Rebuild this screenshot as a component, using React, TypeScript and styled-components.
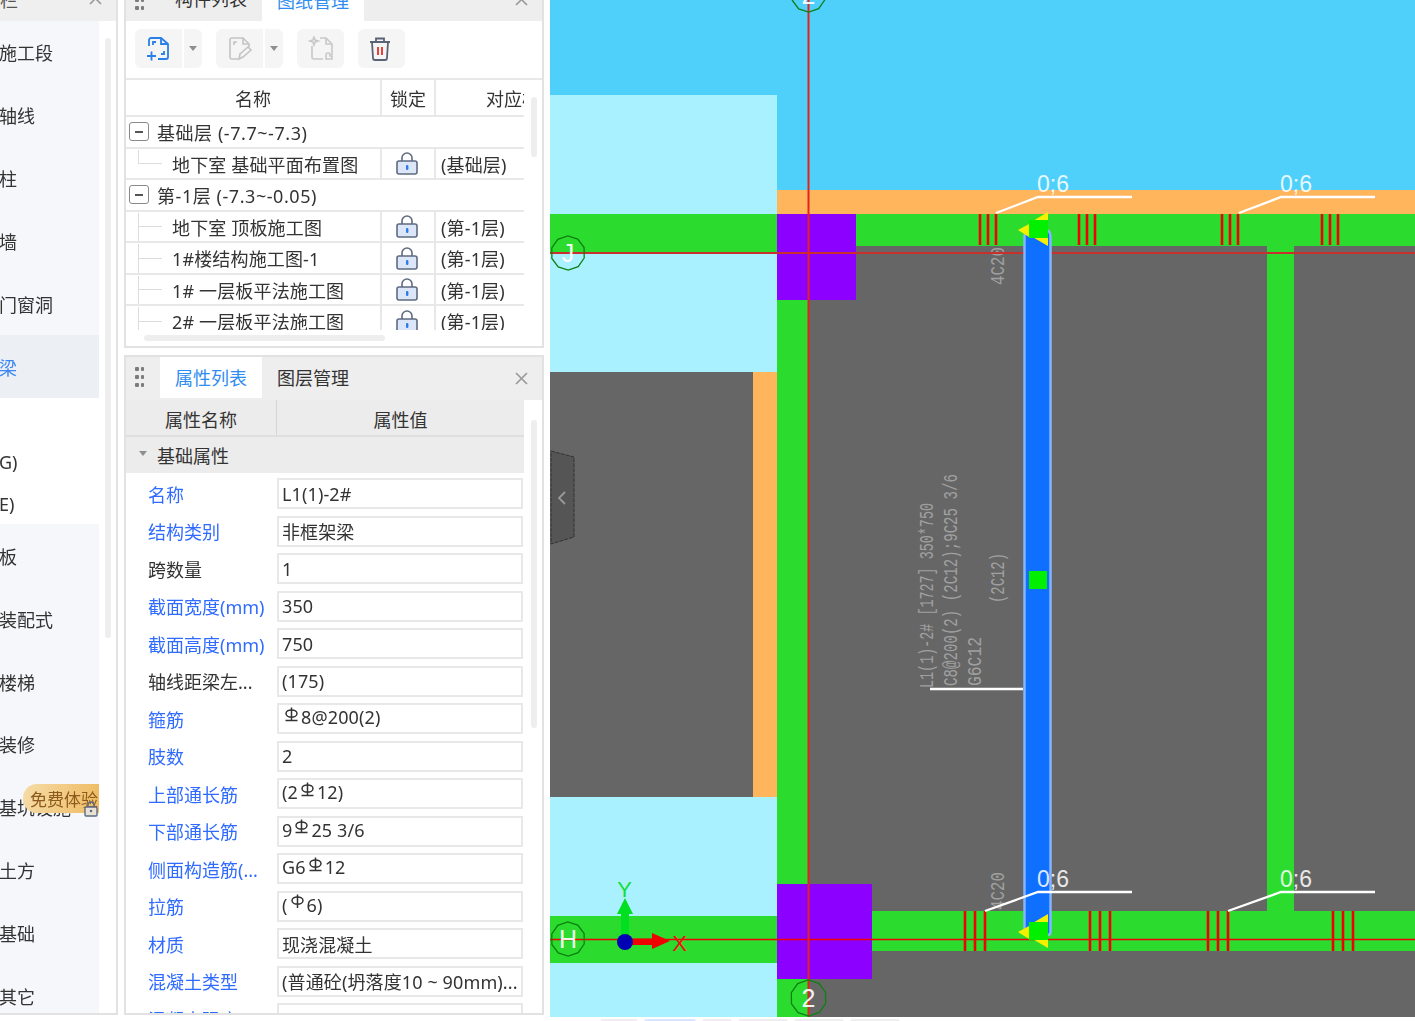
import React from "react";
import styled, { createGlobalStyle } from "styled-components";

const Global = createGlobalStyle`
  html, body { margin: 0; padding: 0; background: #fff; overflow: hidden; }
  body { font-family: "Noto Sans", "Noto Sans CJK SC", sans-serif; color: #333; }
  * { box-sizing: border-box; }
`;

const Page = styled.div`
  width: 1415px;
  height: 1021px;
  overflow: hidden;
`;
const Shell = styled.div`
  display: flex;
  height: 1045px;
  margin-top: -24px;
  filter: blur(0.6px);
`;

/* ---------- left nav ---------- */
const Sidebar = styled.aside`
  width: 118px;
  height: 1039px;
  flex: none;
  display: flex;
  flex-direction: column;
  border-right: 2px solid #e2e2e2;
  border-bottom: 2px solid #e2e2e2;
  overflow: hidden;
`;
const SideHead = styled.div`
  height: 45px;
  flex: none;
  background: #efefef;
  display: flex;
  align-items: center;
  justify-content: space-between;
  padding-right: 14px;
  font-size: 18px;
  color: #555;
`;
const SideBody = styled.div`
  flex: 1;
  display: flex;
  min-height: 0;
`;
const NavList = styled.nav`
  width: 99px;
  flex: none;
  background: #f5f7fa;
  overflow: hidden;
  position: relative;
`;
const NavItem = styled.div<{ $active?: boolean }>`
  height: 62.9px;
  display: flex;
  align-items: center;
  margin-left: -1px;
  font-size: 18px;
  white-space: nowrap;
  background: ${(p) => (p.$active ? "#eceff4" : "transparent")};
  color: ${(p) => (p.$active ? "#3d86f2" : "#333")};
`;
const NavGroup = styled.div`
  height: 126px;
  padding-top: 43px;
  background: #fff;
`;
const NavSub = styled.div`
  height: 42px;
  display: flex;
  align-items: center;
  font-size: 18px;
  margin-left: -1px;
`;
const FreeBadge = styled.div`
  position: absolute;
  left: 23px;
  top: 763px;
  width: 76px;
  height: 29px;
  padding-left: 7px;
  display: flex;
  align-items: center;
  font-size: 17px;
  white-space: nowrap;
  overflow: hidden;
  color: #8c5a1c;
  border-radius: 14px 0 0 14px;
  background: linear-gradient(100deg, #f6dca8, #efbb62);
`;
const BadgeLock = styled.svg`
  position: absolute;
  left: 84px;
  top: 780px;
`;
const SideTrack = styled.div`
  flex: 1;
  padding: 17px 0 0 6px;
`;
const Thumb = styled.div<{ $h: number }>`
  width: 6px;
  height: ${(p) => p.$h}px;
  border-radius: 3px;
  background: #eeeeee;
`;

/* ---------- panels ---------- */
const PanelColumn = styled.div`
  width: 420px;
  height: 1039px;
  margin-left: 6px;
  flex: none;
  display: flex;
  flex-direction: column;
  gap: 7px;
`;
const Panel = styled.section<{ $h?: number }>`
  ${(p) => (p.$h ? `height: ${p.$h}px; flex: none;` : "flex: 1; min-height: 0;")}
  display: flex;
  flex-direction: column;
  border: 2px solid #e2e2e2;
  overflow: hidden;
`;
const TabBar = styled.div`
  height: 43px;
  flex: none;
  display: flex;
  background: #eeeeee;
`;
const Grip = styled.div<{ $top: number }>`
  width: 34px;
  flex: none;
  padding: ${(p) => p.$top}px 0 0 9px;
  display: grid;
  grid-template-columns: repeat(2, 3.5px);
  grid-auto-rows: 3.5px;
  column-gap: 2px;
  row-gap: 4.5px;
  i { background: #7c7c7c; border-radius: 1px; }
`;
const Tab = styled.div<{ $active?: boolean; $joined?: boolean }>`
  width: 102px;
  height: ${(p) => (p.$joined ? 43 : 41)}px;
  padding-bottom: ${(p) => (p.$joined ? 0 : 1)}px;
  display: flex;
  align-items: center;
  justify-content: center;
  font-size: 18px;
  background: ${(p) => (p.$active ? "#fff" : "transparent")};
  color: ${(p) => (p.$active ? "#2f8cf0" : "#333")};
`;
const CloseMark = styled.div`
  margin-left: auto;
  margin-right: 14px;
  height: 43px;
  display: flex;
  align-items: center;
  color: #9a9a9a;
`;

/* ---------- drawing list ---------- */
const Toolbar = styled.div`
  height: 59px;
  flex: none;
  padding: 8px 0 0 9px;
  display: flex;
  align-items: flex-start;
  gap: 14px;
  border-bottom: 2px solid #e8e8e8;
`;
const SplitGroup = styled.div`
  display: flex;
  gap: 2px;
`;
const ToolBtn = styled.div<{ $split?: boolean }>`
  width: 47px;
  height: 39px;
  background: #f5f5f5;
  border-radius: ${(p) => (p.$split ? "6px 0 0 6px" : "6px")};
  display: flex;
  align-items: center;
  justify-content: center;
`;
const CaretBtn = styled.div`
  width: 18px;
  height: 39px;
  background: #f5f5f5;
  border-radius: 0 6px 6px 0;
  display: flex;
  align-items: center;
  justify-content: center;
  &::after {
    content: "";
    border: 4px solid transparent;
    border-top: 5px solid #8f8f8f;
    border-bottom: 0;
  }
`;
const TableRow = styled.div`
  flex: 1;
  min-height: 0;
  display: flex;
`;
const TableClip = styled.div`
  width: 398px;
  flex: none;
  display: flex;
  flex-direction: column;
  overflow: hidden;
`;
const DrawHead = styled.div`
  height: 37px;
  flex: none;
  display: grid;
  grid-template-columns: 256px 54px 174px;
  border-bottom: 2px solid #e8e8e8;
  font-size: 18px;
`;
const DrawHeadCell = styled.div`
  display: flex;
  align-items: center;
  justify-content: center;
  border-right: 2px solid #e8e8e8;
  white-space: nowrap;
`;
const DrawRows = styled.div`
  height: 213px;
  flex: none;
  overflow: hidden;
`;
const GroupLine = styled.div`
  height: 31.5px;
  display: flex;
  align-items: center;
  font-size: 18px;
  letter-spacing: 0.55px;
  padding-left: 3px;
  border-bottom: 2px solid #e8e8e8;
  white-space: nowrap;
`;
const Collapse = styled.div`
  width: 20px;
  height: 19px;
  margin-right: 8px;
  border: 1.5px solid #8a8a8a;
  border-radius: 3px;
  display: flex;
  align-items: center;
  justify-content: center;
  &::after { content: ""; width: 8px; height: 1.5px; background: #555; }
`;
const ChildLine = styled.div`
  height: 31.5px;
  display: grid;
  grid-template-columns: 256px 54px 1fr;
  font-size: 18px;
  letter-spacing: 0.15px;
  border-bottom: 2px solid #e8e8e8;
  white-space: nowrap;
`;
const ChildName = styled.div`
  display: flex;
  align-items: center;
  padding-top: 1px;
  border-right: 2px solid #e8e8e8;
`;
const Guide = styled.span<{ $last?: boolean }>`
  width: 24px;
  align-self: stretch;
  margin: 0 10px 0 12px;
  background:
    linear-gradient(#dddddd, #dddddd) left top / 1px ${(p) => (p.$last ? "50%" : "100%")} no-repeat,
    linear-gradient(#dddddd, #dddddd) left 50% / 100% 1px no-repeat;
`;
const LockCell = styled.div`
  display: flex;
  align-items: center;
  justify-content: center;
  padding-right: 2px;
  border-right: 2px solid #e8e8e8;
`;
const FloorCell = styled.div`
  display: flex;
  align-items: center;
  padding: 1px 0 0 5px;
`;
const ScrollCol = styled.div<{ $top: number }>`
  flex: 1;
  padding: ${(p) => p.$top}px 0 0 7px;
`;
const HScrollArea = styled.div`
  padding: 5px 0 0 18px;
`;
const HThumb = styled.div`
  width: 241px;
  height: 6px;
  border-radius: 3px;
  background: #eeeeee;
`;

/* ---------- property list ---------- */
const PropHead = styled.div`
  height: 37px;
  flex: none;
  display: grid;
  grid-template-columns: 151px 248px;
  background: #ececec;
  border-bottom: 2px solid #dfdfdf;
  width: 399px;
  font-size: 18px;
`;
const PropHeadCell = styled.div`
  display: flex;
  align-items: center;
  justify-content: center;
  padding-top: 2px;
  border-right: 1px solid #d6d6d6;
`;
const PropGroup = styled.div`
  height: 36px;
  width: 398px;
  flex: none;
  display: flex;
  align-items: center;
  background: #ececec;
  font-size: 18px;
  padding-left: 13px;
  &::before {
    content: "";
    border: 4px solid transparent;
    border-top: 5px solid #8f8f8f;
    border-bottom: 0;
    margin-right: 10px;
    margin-bottom: 3px;
  }
`;
const PropScroll = styled.div`
  flex: 1;
  min-height: 0;
  display: flex;
`;
const PropMain = styled.div`
  width: 398px;
  flex: none;
  display: flex;
  flex-direction: column;
  overflow: hidden;
`;
const PropRows = styled.div`
  flex: 1;
  min-height: 0;
  overflow: hidden;
  padding-top: 2px;
`;
const PropLine = styled.div`
  height: 37.5px;
  display: grid;
  grid-template-columns: 151px 246px;
  align-items: center;
  font-size: 18px;
`;
const PropLabel = styled.div<{ $blue?: boolean }>`
  padding-left: 22px;
  white-space: nowrap;
  color: ${(p) => (p.$blue ? "#2f6bff" : "#333")};
`;
const PropValue = styled.div<{ $raised?: boolean }>`
  height: 31px;
  padding: 0 3px ${(p) => (p.$raised ? 3 : 0)}px 3px;
  display: flex;
  align-items: center;
  border: 2px solid #e8e8e8;
  letter-spacing: 0.12px;
  white-space: pre;
  overflow: hidden;
`;
const SteelSvg = styled.svg`
  flex: none;
  margin: 0 2px 5px;
`;
const TrashSvg = styled.svg`
  margin-right: 3px;
`;

/* ---------- canvas ---------- */
const CanvasCol = styled.div`
  flex: none;
  width: 865px;
  margin-left: 6px;
  display: flex;
  flex-direction: column;
`;
const Drawing = styled.svg`
  display: block;
  width: 865px;
  height: 1041px;
  flex: none;
  background: #666;
`;
const BottomStrip = styled.div`
  height: 4px;
  padding: 2px 0 0 50px;
  display: flex;
  gap: 6px;
`;
const StripPill = styled.div<{ $w: number; $on?: boolean }>`
  width: ${(p) => p.$w}px;
  height: 4px;
  border-radius: 3px 3px 0 0;
  background: ${(p) => (p.$on ? "#d8e6ff" : "#eeeeee")};
`;

/* ---------- small drawings ---------- */
const Lock = () => (
  <svg width="24" height="24" viewBox="0 0 24 24">
    <path d="M7 10V7a5 5 0 0 1 10 0v3" fill="none" stroke="#5f6b80" strokeWidth="1.6" />
    <rect x="2" y="10" width="20" height="13" rx="2" fill="#dbe6f8" stroke="#5f6b80" strokeWidth="1.6" />
    <rect x="11" y="14" width="2.4" height="5" rx="1" fill="#2f7be8" />
  </svg>
);
const SteelMark = ({ plain }: { plain?: boolean }) => (
  <SteelSvg width="15" height="16" viewBox="0 0 15 16">
    <ellipse cx="7.5" cy="6.5" rx="5.5" ry="3.6" fill="none" stroke="#333" strokeWidth="1.5" />
    <path d="M7.5 0.5V14" stroke="#333" strokeWidth="1.5" />
    {!plain && <path d="M1.5 13.5H13.5" stroke="#333" strokeWidth="1.5" />}
  </SteelSvg>
);
const CloseIcon = () => (
  <svg width="13" height="13" viewBox="0 0 13 13">
    <path d="M1 1L12 12M12 1L1 12" stroke="#9a9a9a" strokeWidth="1.7" />
  </svg>
);
const ImportIcon = () => (
  <svg width="26" height="26" viewBox="0 0 26 26" fill="none" stroke="#2a7fe8" strokeWidth="1.8">
    <path d="M3 10V4a2 2 0 0 1 2-2h10l7 6v13a2 2 0 0 1-2 2h-8" />
    <path d="M15 2v6h7" />
    <path d="M7 9V6h3M18 15v3h-3" />
    <path d="M1 20h9M5.5 15.500v9" />
  </svg>
);
const EditDocIcon = () => (
  <svg width="26" height="26" viewBox="0 0 26 26" fill="none" stroke="#c4c4c4" strokeWidth="1.6">
    <path d="M11 23H5a2 2 0 0 1-2-2V4a2 2 0 0 1 2-2h11l6 6v3" />
    <path d="M16 2v6h6" />
    <path d="M7 9V6h3" />
    <path d="M12 23l1-5 8-7 3 3-8 7z" />
  </svg>
);
const ExportDocIcon = () => (
  <svg width="26" height="26" viewBox="0 0 26 26" fill="none" stroke="#c8c8c8" strokeWidth="1.6">
    <path d="M4 10v11a2 2 0 0 0 2 2h9" />
    <path d="M12 2h6l6 6v11" />
    <path d="M18 2v6h6" />
    <path d="M6 1l1.200 3 3 1-3 1-1.200 3-1.200-3-3-1 3-1z" />
    <path d="M18 23v-4a2 2 0 0 1 4 0v1h2v3z" />
  </svg>
);
const TrashIcon = () => (
  <TrashSvg width="24" height="26" viewBox="0 0 24 26" fill="none">
    <path d="M2 6h20M8 6V2.500h8V6" stroke="#5a6375" strokeWidth="1.8" />
    <path d="M4 6l1 16a2 2 0 0 0 2 2h10a2 2 0 0 0 2-2l1-16" stroke="#5a6375" strokeWidth="1.8" />
    <path d="M10 11v8M14 11v8" stroke="#e8403a" strokeWidth="2" />
  </TrashSvg>
);

const decagon = (cx: number, cy: number, r: number) =>
  Array.from({ length: 10 }, (_, i) => {
    const a = (Math.PI * 2 * i) / 10 + 0.3;
    return `${(cx + r * Math.cos(a)).toFixed(1)},${(cy + r * Math.sin(a)).toFixed(1)}`;
  }).join(" ");

const AxisBubble = ({ x, y, r, t }: { x: number; y: number; r: number; t: string }) => (
  <g>
    <polygon points={decagon(x, y, r)} fill="none" stroke="#0e7f12" strokeWidth="1.300" />
    <text x={x} y={y + 9} textAnchor="middle" fontSize="25" fill="#fff" opacity="0.92" fontFamily="Liberation Sans, sans-serif">
      {t}
    </text>
  </g>
);

const Bars = ({ xs, y1, y2 }: { xs: number[]; y1: number; y2: number }) => (
  <g stroke="#f00000" strokeWidth="2.6">
    {xs.map((x) => (
      <line key={x} x1={x} x2={x} y1={y1} y2={y2} />
    ))}
  </g>
);

const Leader = ({ x0, y0, x1, x2, y }: { x0: number; y0: number; x1: number; x2: number; y: number }) => (
  <g>
    <polyline points={`${x0},${y0} ${x1},${y} ${x2},${y}`} fill="none" stroke="#fff" strokeWidth="2.300" />
    <text x={x1 - 1} y={y - 5} fontSize="23" fill="#fff" opacity="0.85" fontFamily="Liberation Sans, sans-serif">
      0;6
    </text>
  </g>
);

const VText = ({ x, y, len, t }: { x: number; y: number; len: number; t: string }) => (
  <text
    transform={`translate(${x} ${y}) rotate(-90)`}
    fontSize="20"
    textLength={len}
    lengthAdjust="spacingAndGlyphs"
    fill="#a0a0a0"
    fontFamily="Liberation Mono, monospace"
  >
    {t}
  </text>
);

const EndMarker = ({ y }: { y: number }) => (
  <g>
    <polygon points={`1048,${y - 8} 1048,${y + 1} 1031,${y + 2}`} fill="#f4f000" />
    <polygon points={`1018,${y + 10} 1029,${y + 4} 1029,${y + 17}`} fill="#f4f000" />
    <polygon points={`1048,${y + 26} 1048,${y + 16} 1029,${y + 15}`} fill="#f4f000" />
    <rect x="1029" y={y} width="19" height="18" fill="#00f000" />
  </g>
);

const CadDrawing = () => (
  <Drawing viewBox="550 -24 865 1041">
    <rect x="550" y="-24" width="865" height="214" fill="#4fd0fb" />
    <rect x="777" y="95" width="638" height="95" fill="#4fd0fb" />
    <rect x="550" y="95" width="227" height="922" fill="#aaf1ff" />
    <rect x="777" y="190" width="638" height="24" fill="#ffb55c" />
    <rect x="808" y="246" width="607" height="771" fill="#666666" />
    <rect x="550" y="372" width="203" height="425" fill="#666666" />
    <rect x="753" y="372" width="24" height="425" fill="#ffb55c" />

    <g fill="#2bdc2f">
      <rect x="550" y="214" width="227" height="39" />
      <rect x="856" y="214" width="559" height="32" />
      <rect x="777" y="214" width="31" height="803" />
      <rect x="1267" y="246" width="27" height="665" />
      <rect x="872" y="911" width="543" height="40" />
      <rect x="550" y="916" width="227" height="47" />
    </g>

    <VText x={1004} y={285} len={38} t="4C20" />
    <VText x={1004} y={910} len={38} t="4C20" />
    <rect x="872" y="911" width="120" height="40" fill="#2bdc2f" />

    <rect x="777" y="214" width="79" height="86" fill="#8b00ff" />
    <rect x="777" y="884" width="95" height="95" fill="#8b00ff" />

    <Bars xs={[980, 988, 996, 1079, 1087, 1095, 1222, 1230, 1238, 1322, 1330, 1338]} y1={214} y2={245} />
    <Bars xs={[965, 975, 985, 1090, 1100, 1110, 1208, 1218, 1228, 1333, 1343, 1353]} y1={911} y2={951} />

    <line x1="550" x2="1415" y1="253" y2="253" stroke="#c8302e" strokeWidth="2" />
    <line x1="550" x2="1415" y1="939.500" y2="939.500" stroke="#f00000" strokeWidth="1.600" />
    <line x1="808.500" x2="808.500" y1="-24" y2="1017" stroke="#e8201c" strokeWidth="2" />

    <path d="M1024.500 932V236q0-6 6-6h14q6 0 6 6v696q0 3-3 3h-20q-3 0-3-3z" fill="#0f6fff" stroke="#86b4ff" strokeWidth="2.500" />

    <EndMarker y={220} />
    <EndMarker y={922} />
    <rect x="1029" y="571" width="18" height="18" fill="#00f000" />

    <VText x={933} y={688} len={185} t="L1(1)-2# [1727] 350*750" />
    <VText x={957} y={686} len={212} t="C8@200(2) (2C12);9C25 3/6" />
    <VText x={981} y={686} len={49} t="G6C12" />
    <VText x={1004} y={603} len={50} t="(2C12)" />
    <line x1="930" x2="1023" y1="689" y2="689" stroke="#fff" strokeWidth="2.300" />

    <Leader x0={996} y0={213} x1={1038} x2={1132} y={197} />
    <Leader x0={1239} y0={213} x1={1281} x2={1375} y={197} />
    <Leader x0={985} y0={911} x1={1038} x2={1132} y={892} />
    <Leader x0={1228} y0={911} x1={1281} x2={1375} y={892} />

    <AxisBubble x={808.5} y={-5} r={17} t="2" />
    <AxisBubble x={568} y={253} r={17} t="J" />
    <AxisBubble x={568} y={939} r={17} t="H" />
    <AxisBubble x={808.5} y={998} r={18} t="2" />

    <polygon points="551,451 574,457 574,537 551,544" fill="#555555" stroke="#333" strokeWidth="1" strokeDasharray="4 1" />
    <path d="M565 492l-6 6 6 6" fill="none" stroke="#999" strokeWidth="1.800" />

    <rect x="621" y="912" width="8" height="28" fill="#00e020" />
    <polygon points="625,898 617,914 633,914" fill="#00e020" />
    <rect x="628" y="938.500" width="26" height="6.500" fill="#f00000" />
    <polygon points="652,933 670,941 652,949" fill="#f00000" />
    <circle cx="625" cy="942" r="8" fill="#0000b4" />
    <text x="624.500" y="897" textAnchor="middle" fontSize="22" fill="#10e030" fontFamily="Liberation Sans, sans-serif">Y</text>
    <text x="679.500" y="951" textAnchor="middle" fontSize="22" fill="#f01010" fontFamily="Liberation Sans, sans-serif">X</text>
  </Drawing>
);

/* ---------- data ---------- */
type Seg = string | { mark: "steel" | "plain" };
const S: Seg = { mark: "steel" };
const P: Seg = { mark: "plain" };

const props: { label: string; blue?: boolean; value: Seg[] }[] = [
  { label: "名称", blue: true, value: ["L1(1)-2#"] },
  { label: "结构类别", blue: true, value: ["非框架梁"] },
  { label: "跨数量", value: ["1"] },
  { label: "截面宽度(mm)", blue: true, value: ["350"] },
  { label: "截面高度(mm)", blue: true, value: ["750"] },
  { label: "轴线距梁左...", value: ["(175)"] },
  { label: "箍筋", blue: true, value: [S, "8@200(2)"] },
  { label: "肢数", blue: true, value: ["2"] },
  { label: "上部通长筋", blue: true, value: ["(2", S, "12)"] },
  { label: "下部通长筋", blue: true, value: ["9", S, "25 3/6"] },
  { label: "侧面构造筋(...", blue: true, value: ["G6", S, "12"] },
  { label: "拉筋", blue: true, value: ["(", P, "6)"] },
  { label: "材质", blue: true, value: ["现浇混凝土"] },
  { label: "混凝土类型", blue: true, value: ["(普通砼(坍落度10 ~ 90mm)..."] },
  { label: "混凝土强度", blue: true, value: ["(C30)"] },
];

const drawings: { group?: string; name?: string; floor?: string; last?: boolean }[] = [
  { group: "基础层 (-7.7~-7.3)" },
  { name: "地下室 基础平面布置图", floor: "(基础层)", last: true },
  { group: "第-1层 (-7.3~-0.05)" },
  { name: "地下室 顶板施工图", floor: "(第-1层)" },
  { name: "1#楼结构施工图-1", floor: "(第-1层)" },
  { name: "1# 一层板平法施工图", floor: "(第-1层)" },
  { name: "2# 一层板平法施工图", floor: "(第-1层)" },
];

const navTop = ["施工段", "轴线", "柱", "墙", "门窗洞"];
const navBottom = ["板", "装配式", "楼梯", "装修", "基坑设施", "土方", "基础", "其它"];

const GripDots = ({ top }: { top: number }) => (
  <Grip $top={top}>
    {Array.from({ length: 6 }, (_, i) => (
      <i key={i} />
    ))}
  </Grip>
);

export default function App() {
  return (
    <Page>
      <Global />
      <Shell>
        <Sidebar>
          <SideHead>
            <span>栏</span>
            <CloseIcon />
          </SideHead>
          <SideBody>
            <NavList>
              {navTop.map((t) => (
                <NavItem key={t}>{t}</NavItem>
              ))}
              <NavItem $active>梁</NavItem>
              <NavGroup>
                <NavSub>G)</NavSub>
                <NavSub>E)</NavSub>
              </NavGroup>
              {navBottom.map((t) => (
                <NavItem key={t}>{t}</NavItem>
              ))}
              <FreeBadge>免费体验</FreeBadge>
              <BadgeLock width="14" height="16" viewBox="0 0 14 16">
                <path d="M4 6V4a3 3 0 0 1 6 0v2" fill="none" stroke="#5f6b80" strokeWidth="1.400" />
                <rect x="1" y="6" width="12" height="9" rx="1" fill="#e8e3d6" stroke="#5f6b80" strokeWidth="1.400" />
                <circle cx="7" cy="10" r="1.300" fill="#5f6b80" />
              </BadgeLock>
            </NavList>
            <SideTrack>
              <Thumb $h={600} />
            </SideTrack>
          </SideBody>
        </Sidebar>

        <PanelColumn>
          <Panel $h={372}>
            <TabBar>
              <GripDots top={12} />
              <Tab>构件列表</Tab>
              <Tab $active $joined>图纸管理</Tab>
              <CloseMark><CloseIcon /></CloseMark>
            </TabBar>
            <Toolbar>
              <SplitGroup>
                <ToolBtn $split><ImportIcon /></ToolBtn>
                <CaretBtn />
              </SplitGroup>
              <SplitGroup>
                <ToolBtn $split><EditDocIcon /></ToolBtn>
                <CaretBtn />
              </SplitGroup>
              <ToolBtn><ExportDocIcon /></ToolBtn>
              <ToolBtn><TrashIcon /></ToolBtn>
            </Toolbar>
            <TableRow>
              <div>
                <TableClip>
                  <DrawHead>
                    <DrawHeadCell>名称</DrawHeadCell>
                    <DrawHeadCell>锁定</DrawHeadCell>
                    <DrawHeadCell>对应楼层</DrawHeadCell>
                  </DrawHead>
                  <DrawRows>
                    {drawings.map((d, i) =>
                      d.group ? (
                        <GroupLine key={i}>
                          <Collapse />
                          {d.group}
                        </GroupLine>
                      ) : (
                        <ChildLine key={i}>
                          <ChildName>
                            <Guide $last={d.last} />
                            {d.name}
                          </ChildName>
                          <LockCell><Lock /></LockCell>
                          <FloorCell>{d.floor}</FloorCell>
                        </ChildLine>
                      )
                    )}
                  </DrawRows>
                </TableClip>
                <HScrollArea><HThumb /></HScrollArea>
              </div>
              <ScrollCol $top={17}>
                <Thumb $h={60} />
              </ScrollCol>
            </TableRow>
          </Panel>

          <Panel>
            <TabBar>
              <GripDots top={10} />
              <Tab $active>属性列表</Tab>
              <Tab>图层管理</Tab>
              <CloseMark><CloseIcon /></CloseMark>
            </TabBar>
            <PropScroll>
              <PropMain>
                <PropHead>
                  <PropHeadCell>属性名称</PropHeadCell>
                  <PropHeadCell>属性值</PropHeadCell>
                </PropHead>
                <PropGroup>基础属性</PropGroup>
                <PropRows>
                  {props.map((p) => {
                    const raised = p.value.some((v) => typeof v !== "string");
                    return (
                      <PropLine key={p.label}>
                        <PropLabel $blue={p.blue}>{p.label}</PropLabel>
                        <PropValue $raised={raised}>
                          {p.value.map((v, i) =>
                            typeof v === "string" ? (
                              <span key={i}>{v}</span>
                            ) : (
                              <SteelMark key={i} plain={v.mark === "plain"} />
                            )
                          )}
                        </PropValue>
                      </PropLine>
                    );
                  })}
                </PropRows>
              </PropMain>
              <ScrollCol $top={20}>
                <Thumb $h={308} />
              </ScrollCol>
            </PropScroll>
          </Panel>
        </PanelColumn>

        <CanvasCol>
          <CadDrawing />
          <BottomStrip>
            <StripPill $w={38} />
            <StripPill $w={52} $on />
            <StripPill $w={30} />
            <StripPill $w={50} />
            <StripPill $w={50} />
            <StripPill $w={50} />
          </BottomStrip>
        </CanvasCol>
      </Shell>
    </Page>
  );
}
